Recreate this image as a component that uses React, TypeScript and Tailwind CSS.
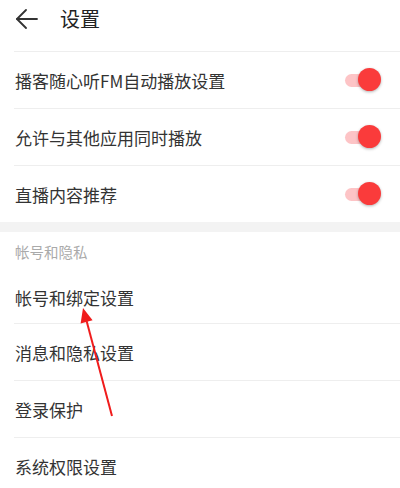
import React from "react";

type Row = { label: string; toggle?: boolean };

const toggleRows: Row[] = [
  { label: "播客随心听FM自动播放设置", toggle: true },
  { label: "允许与其他应用同时播放", toggle: true },
  { label: "直播内容推荐", toggle: true },
];

const accountRows = ["帐号和绑定设置", "消息和隐私设置", "登录保护", "系统权限设置"];

function Toggle() {
  return (
    <div className="relative w-[36px] h-[24px] flex items-center">
      <div className="w-[34px] h-[13px] rounded-full bg-[#fdc4c6]" />
      <div className="absolute right-0 top-0 w-[23px] h-[23px] rounded-full bg-[#fa3b3b] shadow-[0_1px_3px_rgba(0,0,0,0.3)]" />
    </div>
  );
}

export default function App() {
  return (
    <div
      className="relative w-[400px] h-[488px] overflow-hidden bg-white text-[#333]"
      style={{ fontFamily: '"Noto Sans CJK SC", "Noto Sans", sans-serif' }}
    >
      {/* header */}
      <div className="h-[51px] flex items-start pl-[16px]">
        <div className="h-[38px] flex items-center gap-[22px]">
          <svg width="22" height="20" viewBox="0 0 22 20" fill="none" stroke="#333" strokeWidth="1.8" strokeLinecap="round">
            <path d="M1 10H21" />
            <path d="M10 1L1 10L10 19" strokeLinejoin="round" />
          </svg>
          <span className="text-[20px] leading-none text-[#222]">设置</span>
        </div>
      </div>

      {/* toggles */}
      <div className="pl-[14px]">
        {toggleRows.map((r, i) => (
          <div key={r.label} className={`border-t border-[#eeeeee] ${i === 0 ? "" : ""}`}>
            <div className="h-[56px] flex items-center justify-between pl-px pr-[19px]">
              <span className="text-[17px] leading-none">{r.label}</span>
              {r.toggle && <Toggle />}
            </div>
          </div>
        ))}
      </div>

      <div className="h-[10px] bg-[#f3f3f3]" />

      {/* account section */}
      <div className="pl-[15px] h-[40px] flex items-center">
        <span className="text-[14.5px] leading-none text-[#aaaaaa]">帐号和隐私</span>
      </div>
      <div className="pl-[14px]">
        {accountRows.map((label, i) => (
          <div key={label} className={i === 0 ? "" : "border-t border-[#eeeeee]"}>
            <div className={`${i === 0 ? "h-[51px]" : "h-[56px]"} flex items-center pl-px`}>
              <span className="text-[17px] leading-none">{label}</span>
            </div>
          </div>
        ))}
      </div>

      {/* annotation arrow */}
      <svg className="absolute left-0 top-0 pointer-events-none" width="400" height="488" viewBox="0 0 400 488">
        <line x1="86.6" y1="321" x2="112" y2="416" stroke="#f01c1c" strokeWidth="2" />
        <polygon points="83,308 80.6,323.4 92.6,320.2" fill="#f01c1c" />
      </svg>
    </div>
  );
}
